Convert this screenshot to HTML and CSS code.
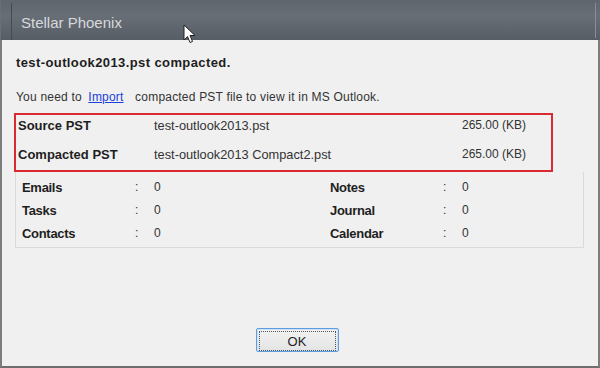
FILE: index.html
```html
<!DOCTYPE html>
<html>
<head>
    <title>Stellar Phoenix</title>
    <link rel="stylesheet" href="styles.css">
</head>
<body>
    <div class="window">
        <div class="titlebar">
            <span class="title">Stellar Phoenix</span>
            <svg class="cursor" width="14" height="20" viewBox="0 0 14 20">
                <path d="M1 1 L1 16 L4.5 12.5 L7 18.5 L9.5 17.5 L7 11.5 L12 11.5 Z" fill="#fff" stroke="#222" stroke-width="1"/>
            </svg>
        </div>

        <div class="content">
            <h1>test-outlook2013.pst compacted.</h1>
            <p class="notice">You need to <a href="#">Import</a> compacted PST file to view it in MS Outlook.</p>

            <div class="summary">
                <div class="row">
                    <span class="label">Source PST</span>
                    <span class="file">test-outlook2013.pst</span>
                    <span class="size">265.00 (KB)</span>
                </div>
                <div class="row">
                    <span class="label">Compacted PST</span>
                    <span class="file">test-outlook2013 Compact2.pst</span>
                    <span class="size">265.00 (KB)</span>
                </div>
            </div>

            <div class="stats">
                <div class="stat"><span class="name">Emails</span><span class="colon">:</span><span>0</span></div>
                <div class="stat"><span class="name">Notes</span><span class="colon">:</span><span>0</span></div>
                <div class="stat"><span class="name">Tasks</span><span class="colon">:</span><span>0</span></div>
                <div class="stat"><span class="name">Journal</span><span class="colon">:</span><span>0</span></div>
                <div class="stat"><span class="name">Contacts</span><span class="colon">:</span><span>0</span></div>
                <div class="stat"><span class="name">Calendar</span><span class="colon">:</span><span>0</span></div>
            </div>

            <div class="footer">
                <button type="button" class="ok-btn"><span>OK</span></button>
            </div>
        </div>
    </div>
</body>
</html>
```

FILE: styles.css
```css
body {
    margin: 0;
    font-family: "Liberation Sans", Arial, sans-serif;
    font-size: 12px;
    color: #1e1e1e;
}
.window {
    width: 600px;
    height: 368px;
    box-sizing: border-box;
    border-left: 2px solid #7c7c7c;
    border-right: 2px solid #7c7c7c;
    border-bottom: 2px solid #6e6e6e;
    background: #f0f0f0;
    display: flex;
    flex-direction: column;
}
.titlebar {
    position: relative;
    height: 40px;
    margin: 0 -2px;
    background: linear-gradient(#5f656c, #686e75 40%, #575d64);
    display: flex;
    align-items: center;
    padding-left: 20px;
    border-left: 1px solid #6a7077;
}
.titlebar::before {
    content: "";
    position: absolute;
    left: 10px;
    top: 3px;
    bottom: 0;
    width: 1px;
    background: #464b51;
}
.titlebar::after {
    content: "";
    position: absolute;
    right: 4px;
    top: 3px;
    bottom: 2px;
    width: 1px;
    background: #8a8f95;
}
.title {
    color: #d7d9dc;
    font-size: 15px;
    margin-top: 5px;
}
.cursor {
    position: absolute;
    left: 182px;
    top: 24px;
}
.content {
    flex: 1;
    padding: 15px 14px 0 12px;
    display: flex;
    flex-direction: column;
}
h1 {
    font-size: 13px;
    font-weight: bold;
    margin: 0 0 0 2px;
    line-height: 15px;
    letter-spacing: 0.4px;
}
.notice {
    margin: 20px 0 0 2px;
    line-height: 15px;
    color: #333;
    letter-spacing: 0.2px;
}
.notice a {
    color: #1a3fd8;
    margin: 0 8px 0 3px;
}
.summary {
    margin-top: 8px;
    width: 539px;
    height: 59px;
    box-sizing: border-box;
    border: 2px solid #d82a30;
    padding: 3px 0 0 2px;
}
.row {
    display: grid;
    grid-template-columns: 136px 308px auto;
    line-height: 15px;
    margin-bottom: 14px;
}
.label {
    font-weight: bold;
    font-size: 13px;
}
.file, .size {
    color: #333;
}
.file {
    font-size: 12.8px;
}
.stats {
    margin-left: 1px;
    width: 569px;
    height: 76px;
    box-sizing: border-box;
    border: 1px solid #dadada;
    border-top: none;
    padding: 8px 0 0 6px;
    display: grid;
    grid-template-columns: 308px auto;
    align-content: start;
    row-gap: 8px;
}
.stat {
    display: grid;
    grid-template-columns: 113px 19px auto;
    line-height: 15px;
    color: #333;
}
.name {
    font-weight: bold;
    font-size: 13px;
    color: #1e1e1e;
    letter-spacing: -0.3px;
}
.footer {
    margin-top: auto;
    padding-bottom: 14px;
    display: flex;
    justify-content: center;
    padding-right: 4px;
}
.ok-btn {
    width: 83px;
    height: 24px;
    padding: 2px;
    border: 1px solid #5e9ee0;
    border-radius: 2px;
    background: linear-gradient(#f2f2f2, #e4e4e4);
    box-shadow: inset 0 0 0 1px #c9e2f8;
    font-family: "Liberation Sans", Arial, sans-serif;
    font-size: 13px;
    color: #222;
}
.ok-btn span {
    display: flex;
    align-items: center;
    justify-content: center;
    height: 100%;
    border: 1px dotted #555;
}
```
